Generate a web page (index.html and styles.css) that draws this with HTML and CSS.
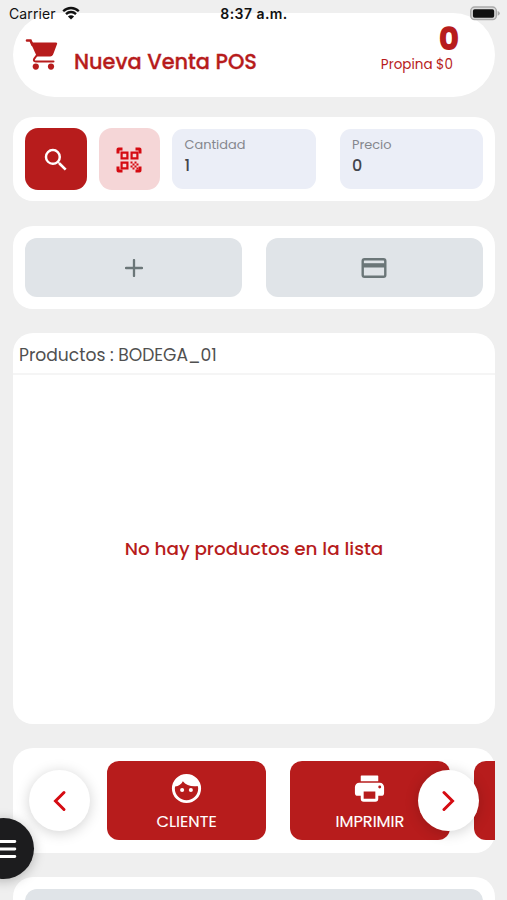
FILE: index.html
```html
<!DOCTYPE html>
<html lang="es">
<head>
<meta charset="utf-8">
<meta name="viewport" content="width=device-width, initial-scale=1">
<title>Nueva Venta POS</title>
<link rel="stylesheet" href="styles.css">
</head>
<body>
<div class="status">
  <div class="carrier"><span class="carrier-name">Carrier</span>
    <svg class="wifi" viewBox="0 0 18 14"><path d="M1.2 5.2C5.6.9 12.4.9 16.8 5.2M4 8.1c2.9-2.8 7.1-2.8 10 0" fill="none" stroke="#111" stroke-width="2.3"/><path d="M9 13.5 5.9 10.4c1.7-1.6 4.5-1.6 6.2 0z" fill="#111"/></svg>
  </div>
  <span class="clock">8:37 a.m.</span>
  <svg class="battery" viewBox="0 0 31 15"><rect x=".8" y=".8" width="26.4" height="13" rx="4" fill="#ddd" stroke="#aaa" stroke-width="1.5"/><rect x="3" y="3" width="22" height="8.8" rx="1.8"/><path d="M28.6 4.9q2.2.7 2.2 2.4t-2.2 2.4z" fill="#aaa"/></svg>
</div>
<main class="page">
  <header class="card header">
    <svg class="cart" viewBox="0 0 36 36"><path d="M2 4.500h3.500L7.500 9" fill="none" stroke="currentColor" stroke-width="2.600" stroke-linecap="round"/><path d="M5.500 6.500H31q1.700 0 1.100 1.600L28 18.700q-.8 1.800-2.800 1.800H11.800z"/><path d="m12 19-2.800 3.800q-1.200 2.600 1.600 2.600H28.500" fill="none" stroke="currentColor" stroke-width="2" stroke-linecap="round"/><circle cx="10.800" cy="30.600" r="3.100"/><circle cx="26" cy="30.600" r="3.100"/></svg>
    <h1 class="title">Nueva Venta POS</h1>
    <div class="totals"><strong class="total">0</strong><span class="tip">Propina $0</span></div>
  </header>

  <section class="card search-row">
    <button class="square primary" aria-label="Buscar"><svg viewBox="0 0 24 24" class="i-search"><path d="M15.500 14h-.79l-.28-.27A6.471 6.471 0 0 0 16 9.500 6.500 6.500 0 1 0 9.500 16c1.610 0 3.090-.59 4.230-1.570l.27.28v.79l5 4.990L20.490 19l-4.990-5zm-6 0C7.010 14 5 11.990 5 9.500S7.010 5 9.500 5 14 7.010 14 9.500 11.990 14 9.500 14z"/></svg></button>
    <button class="square soft" aria-label="Escanear"><svg viewBox="0 0 26 26" class="i-qr"><path d="M.5 6.500v-4q0-2 2-2h4v3h-3v3zM19.500.5h4q2 0 2 2v4h-3v-3h-3zM25.500 19.500v4q0 2-2 2h-4v-3h3v-3zM6.500 25.500h-4q-2 0-2-2v-4h3v3h3z"/><path fill="none" stroke="currentColor" stroke-width="2.200" d="M5.600 5.600h5.800v5.800H5.600zM15.600 5.600h5.800v5.800h-5.800zM5.600 15.600h5.800v5.800H5.600z"/><path d="M14.500 14.500h2v2h-2zm4 0h2v2h-2zm-2 2h2v2h-2zm4 0h2v2h-2zm-6 2h2v2h-2zm4 0h2v2h-2zm-2 2h2v2h-2zm4 0h2v2h-2z"/></svg></button>
    <label class="field qty"><span class="label">Cantidad</span><span class="value">1</span></label>
    <label class="field"><span class="label">Precio</span><span class="value">0</span></label>
  </section>

  <section class="card actions">
    <button class="muted" aria-label="Agregar"><svg viewBox="0 0 18 18" class="i-plus"><path d="M9 1v16M1 9h16" fill="none" stroke="currentColor" stroke-width="2.300" stroke-linecap="round"/></svg></button>
    <button class="muted" aria-label="Pago"><svg viewBox="0 0 26 22" class="i-card"><rect x="1.700" y="2.200" width="22.600" height="17.600" rx="1.800" fill="none" stroke="currentColor" stroke-width="2.400"/><path d="M1 6.200h24v4.300H1z"/></svg></button>
  </section>

  <section class="card products">
    <h2 class="products-title"><span>Productos : BODEGA_01</span></h2>
    <p class="empty"><span>No hay productos en la lista</span></p>
  </section>

  <section class="card carousel">
    <div class="track">
      <button class="tile"><svg viewBox="0 0 24 24" class="i-tile"><path fill-rule="evenodd" d="M12 2a10 10 0 1 0 0 20 10 10 0 0 0 0-20zM9.500 7C11.300 9.300 14 10.500 17.500 10.500c.7 0 1.400-.1 2.100-.2.3.6.4 1.100.4 1.700a8 8 0 0 1-16 0c0-.5.1-.9.2-1.300C6.700 10.200 8.600 9 9.500 7z"/><circle cx="9" cy="13" r="1.400"/><circle cx="15" cy="13" r="1.400"/></svg><span>CLIENTE</span></button>
      <button class="tile"><svg viewBox="0 0 24 24" class="i-tile"><path fill-rule="evenodd" d="M6.500 3h11q.5 0 .5.5V7H6V3.500q0-.5.500-.5zM19 8H5c-1.660 0-3 1.340-3 3v4q0 2 2 2h2v2a2 2 0 0 0 2 2h8a2 2 0 0 0 2-2v-2h2q2 0 2-2v-4c0-1.660-1.340-3-3-3zm-3 11H8v-5h8v5zm3-7a1 1 0 1 1 0-2 1 1 0 0 1 0 2z"/></svg><span>IMPRIMIR</span></button>
      <button class="tile" aria-label="Más"></button>
    </div>
    <button class="nav prev" aria-label="Anterior"><svg viewBox="0 0 14 22"><path d="m11 2.500-8.500 8.500 8.500 8.500"/></svg></button>
    <button class="nav next" aria-label="Siguiente"><svg viewBox="0 0 14 22"><path d="m2 2.500 8.500 8.500L2 19.500"/></svg></button>
  </section>

  <section class="card footer"><div class="muted"></div></section>
</main>
<button class="menu" aria-label="Menú"><svg viewBox="0 0 24 20"><path d="M2 3h20M2 10h20M2 17h20"/></svg></button>
</body>
</html>
```

FILE: styles.css
```css
* { box-sizing: border-box; }
html { height: 900px; overflow: hidden; }
body {
  margin: 0;
  height: 900px;
  overflow: hidden;
  position: relative;
  background: #efefef;
  color: #444;
  font-family: Poppins, Inter, "Open Sans", sans-serif;
}
button { border: 0; padding: 0; margin: 0; font: inherit; color: inherit; }
svg { display: block; fill: currentColor; flex: none; }
h1, h2, p { margin: 0; }

.status {
  position: absolute;
  z-index: 3;
  inset: 0 0 auto;
  height: 27px;
  padding: 0 7px 0 9px;
  display: grid;
  grid-template-columns: 1fr auto 1fr;
  align-items: center;
  font: 14px/27px Inter, sans-serif;
  color: #111;
}
.carrier { display: flex; align-items: center; gap: 6px; }
.carrier-name { letter-spacing: .1px; }
.wifi { width: 18px; height: 14px; margin-top: -2px; }
.clock { font-weight: 600; letter-spacing: .45px; margin-left: -1px; }
.battery { width: 30px; height: 15px; justify-self: end; }

.page {
  height: 900px;
  overflow: hidden;
  padding: 13px 12px 0 13px;
  display: flex;
  flex-direction: column;
}
.card { background: #fff; border-radius: 20px; flex: none; }

.header {
  height: 84px;
  border-radius: 42px;
  padding: 0 34px 0 12px;
  display: flex;
  color: #b71c1c;
}
.cart { width: 36px; height: 36px; margin-top: 23px; }
.title { margin: 34px 0 0 13px; font-size: 20.9px; line-height: 30px; font-weight: 500; white-space: nowrap; -webkit-text-stroke: .3px currentColor; }
.totals { margin-left: auto; display: flex; flex-direction: column; align-items: flex-end; }
.total { font-size: 31px; line-height: 32px; font-weight: 800; margin: 10px 2px 0 0; }
.tip { font-size: 13.5px; line-height: 18px; margin: 1px 8px 0 0; white-space: nowrap; }

.search-row { height: 84px; margin-top: 20px; padding: 11px 12px; display: flex; gap: 12px; }
.square { width: 61.5px; height: 61.5px; border-radius: 13px; display: grid; place-items: center; flex: none; }
.primary { background: #b71c1c; color: #fff; }
.soft { background: #f5d6d7; color: #d50b12; }
.i-search { width: 30px; height: 30px; margin-top: 2px; }
.i-qr { width: 26px; height: 26px; margin-top: 2px; }
.field { flex: 1; height: 60px; margin-top: 1px; border-radius: 11px; background: #ebeef7; padding: 6px 12px 6px 12.5px; display: flex; flex-direction: column; }
.qty { margin-right: 12px; }
.label { font-size: 12.9px; line-height: 20px; color: #85878d; }
.value { font-size: 16px; line-height: 21px; font-weight: 500; color: #43454c; }

.actions { height: 83px; margin-top: 25px; padding: 12px; display: grid; grid-template-columns: 1fr 1fr; gap: 24px; }
.muted { height: 58.5px; border-radius: 12px; background: #e0e4e8; color: #6b7678; display: grid; place-items: center; }
.i-plus { width: 18px; height: 18px; margin-top: 2px; }
.i-card { width: 26px; height: 22px; margin: 2px 1px 0 0; }

.products { height: 391px; margin-top: 24px; display: flex; flex-direction: column; }
.products-title { height: 42px; padding: 7px 6px 0; border-bottom: 2px solid #f5f5f5; font-size: 17.15px; line-height: 31px; font-weight: 400; color: #505050; }
.empty { flex: 1; display: grid; place-items: center; padding-bottom: 2px; font-size: 18.4px; font-weight: 500; color: #b71c1c; }

.carousel { height: 105px; margin-top: 24px; position: relative; }
.track { height: 105px; padding: 12.5px 0 0 94px; display: flex; gap: 24px; overflow: hidden; }
.tile { width: 159.3px; height: 79.5px; flex: none; border-radius: 12px; background: #b71c1c; color: #fff; display: flex; flex-direction: column; align-items: center; padding-top: 10px; font-size: 16.2px; line-height: 24px; font-weight: 400; -webkit-text-stroke: .1px currentColor; }
.i-tile { width: 35px; height: 35px; margin-bottom: 4px; }
.nav { position: absolute; top: 22px; width: 61px; height: 61px; border-radius: 50%; background: #fff; color: #d50b12; display: grid; place-items: center; box-shadow: 0 2px 14px rgba(0,0,0,.18); }
.prev { left: 16px; }
.next { left: 405px; }
.nav svg { width: 14px; height: 22px; fill: none; stroke: currentColor; stroke-width: 3; stroke-linecap: round; }

.footer { height: 83px; margin-top: 24px; padding: 12px; }
.menu { position: absolute; left: -27px; top: 818px; width: 61px; height: 61px; border-radius: 50%; background: #1c1c1e; color: #fff; display: grid; place-items: center; box-shadow: 0 2px 12px rgba(0,0,0,.25); }
.menu svg { width: 26px; height: 22px; fill: none; stroke: currentColor; stroke-width: 2.700; stroke-linecap: round; }
```
